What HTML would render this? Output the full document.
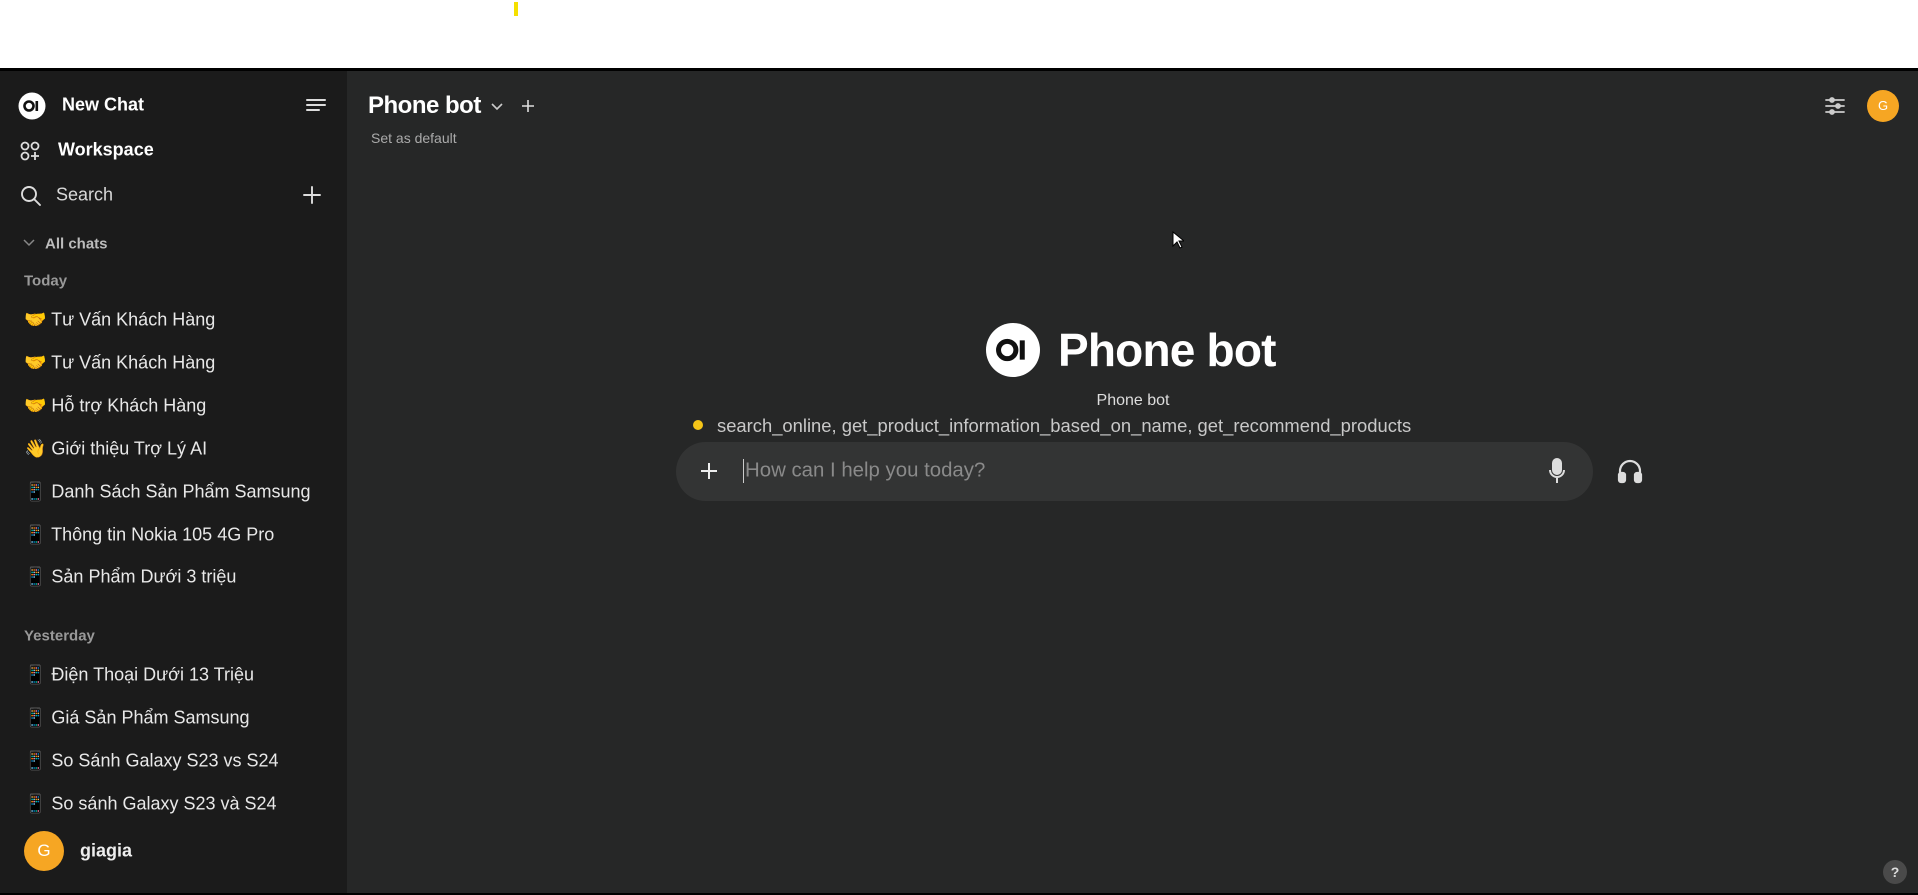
<!DOCTYPE html>
<html><head><meta charset="utf-8"><style>
*{margin:0;padding:0;box-sizing:border-box}
body{width:1918px;height:895px;background:#fff;font-family:"Liberation Sans","Noto Sans CJK SC",sans-serif;position:relative;overflow:hidden}
.abs{position:absolute}
#top{left:0;top:0;width:1918px;height:68px;background:#fff}
#bar{left:0;top:68px;width:1918px;height:3px;background:#000}
#side{left:0;top:71px;width:347px;height:822px;background:#1b1b1b}
#main{left:347px;top:71px;width:1571px;height:822px;background:#262727}
#bot{left:0;top:893px;width:1918px;height:2px;background:#000}
.t{position:absolute;color:#ececec;white-space:nowrap;transform:translateY(-50%)}
.it{font-size:18px;left:24px;color:#e8e8e8}
</style></head><body>
<div class="abs" id="top"></div><div class="abs" style="left:514px;top:2px;width:4px;height:14px;background:#f5e000"></div>
<div class="abs" id="bar"></div>
<div class="abs" id="side"></div>
<div class="abs" id="main"></div>
<div class="abs" id="bot"></div>

<svg class="abs" style="left:18px;top:92px" width="28" height="28" viewBox="0 0 28 28"><circle cx="14" cy="14" r="13.5" fill="#fff"/><circle cx="11" cy="14" r="4.5" fill="none" stroke="#111" stroke-width="2.6"/><rect x="17.5" y="9" width="2.6" height="10" fill="#111"/></svg>
<div class="t" style="left:62px;top:105px;font-size:18px;font-weight:bold;color:#fff">New Chat</div>
<svg class="abs" style="left:305px;top:97px" width="22" height="16" viewBox="0 0 22 16" stroke="#ddd" stroke-width="2" stroke-linecap="round"><path d="M2 3h18M2 8h18M2 13h12"/></svg>
<svg class="abs" style="left:19px;top:140px" width="22" height="22" viewBox="0 0 22 22" fill="none" stroke="#ddd" stroke-width="1.8"><circle cx="6" cy="6" r="3.5"/><circle cx="16" cy="6" r="3.5"/><circle cx="6" cy="16" r="3.5"/><path d="M16 12v8M12 16h8"/></svg>
<div class="t" style="left:58px;top:150px;font-size:18px;font-weight:bold;color:#fff">Workspace</div>
<svg class="abs" style="left:20px;top:185px" width="22" height="22" viewBox="0 0 22 22" fill="none" stroke="#ddd" stroke-width="1.9"><circle cx="9" cy="9" r="7"/><path d="M14 14l6 6" stroke-linecap="round"/></svg>
<div class="t" style="left:56px;top:195px;font-size:18px;color:#d8d8d8">Search</div>
<svg class="abs" style="left:302px;top:185px" width="20" height="20" viewBox="0 0 20 20" stroke="#ddd" stroke-width="1.9" stroke-linecap="round"><path d="M10 2v16M2 10h16"/></svg>
<svg class="abs" style="left:23px;top:238px" width="12" height="10" viewBox="0 0 12 10" fill="none" stroke="#888" stroke-width="1.5"><path d="M1 2l5 5 5-5"/></svg>
<div class="t" style="left:45px;top:244px;font-size:15px;font-weight:bold;color:#bbb">All chats</div>
<div class="t" style="left:24px;top:281px;font-size:15px;font-weight:bold;color:#999">Today</div>
<div class="t it" style="top:320px">🤝 Tư Vấn Khách Hàng</div>
<div class="t it" style="top:363px">🤝 Tư Vấn Khách Hàng</div>
<div class="t it" style="top:406px">🤝 Hỗ trợ Khách Hàng</div>
<div class="t it" style="top:449px">👋 Giới thiệu Trợ Lý AI</div>
<div class="t it" style="top:492px;width:291px;overflow:hidden">📱 Danh Sách Sản Phẩm Samsung</div>
<div class="t it" style="top:535px">📱 Thông tin Nokia 105 4G Pro</div>
<div class="t it" style="top:577px">📱 Sản Phẩm Dưới 3 triệu</div>
<div class="t" style="left:24px;top:636px;font-size:15px;font-weight:bold;color:#999">Yesterday</div>
<div class="t it" style="top:675px">📱 Điện Thoại Dưới 13 Triệu</div>
<div class="t it" style="top:718px">📱 Giá Sản Phẩm Samsung</div>
<div class="t it" style="top:761px">📱 So Sánh Galaxy S23 vs S24</div>
<div class="t it" style="top:804px">📱 So sánh Galaxy S23 và S24</div>
<div class="abs" style="left:24px;top:831px;width:40px;height:40px;border-radius:50%;background:#f6a623;color:#fff;font-size:17px;text-align:center;line-height:40px">G</div>
<div class="t" style="left:80px;top:851px;font-size:18px;font-weight:bold;color:#eee">giagia</div>

<div class="t" style="left:368px;top:106px;font-size:24px;font-weight:bold;color:#fff;letter-spacing:-0.5px">Phone bot</div>
<svg class="abs" style="left:491px;top:102px" width="12" height="9" viewBox="0 0 12 9" fill="none" stroke="#ccc" stroke-width="1.6"><path d="M1 2l5 5 5-5"/></svg>
<svg class="abs" style="left:521px;top:99px" width="14" height="14" viewBox="0 0 14 14" stroke="#ddd" stroke-width="1.6"><path d="M7 1v12M1 7h12"/></svg>
<div class="t" style="left:371px;top:138px;font-size:14px;color:#aaa">Set as default</div>
<svg class="abs" style="left:1824px;top:96px" width="22" height="20" viewBox="0 0 22 20" stroke="#ccc" stroke-width="1.8" stroke-linecap="round"><path d="M2 4h18M2 10h18M2 16h18"/><circle cx="8" cy="4" r="2" fill="#ccc"/><circle cx="14" cy="10" r="2" fill="#ccc"/><circle cx="8" cy="16" r="2" fill="#ccc"/></svg>
<div class="abs" style="left:1867px;top:90px;width:32px;height:32px;border-radius:50%;background:#f6a623;color:#fff;font-size:13px;text-align:center;line-height:32px">G</div>

<svg class="abs" style="left:986px;top:323px" width="54" height="54" viewBox="0 0 28 28"><circle cx="14" cy="14" r="14" fill="#fff"/><circle cx="11" cy="14" r="4.5" fill="none" stroke="#111" stroke-width="2.6"/><rect x="17.5" y="9" width="2.6" height="10" fill="#111"/></svg>
<div class="t" style="left:1058px;top:350px;font-size:46px;font-weight:bold;color:#fff;letter-spacing:-0.8px">Phone bot</div>
<div class="t" style="left:1133px;top:401px;font-size:16px;color:#ddd;transform:translate(-50%,-50%)">Phone bot</div>
<div class="abs" style="left:693px;top:420px;width:10px;height:10px;border-radius:50%;background:#f5c518"></div>
<div class="t" style="left:717px;top:426px;font-size:18.4px;color:#c8c8c8">search_online, get_product_information_based_on_name, get_recommend_products</div>
<div class="abs" style="left:676px;top:442px;width:917px;height:59px;border-radius:30px;background:#333434"></div>
<svg class="abs" style="left:700px;top:462px" width="18" height="18" viewBox="0 0 18 18" stroke="#eee" stroke-width="2"><path d="M9 1v16M1 9h16"/></svg>
<div class="abs" style="left:743px;top:459px;width:1px;height:24px;background:#ccc"></div>
<div class="t" style="left:745px;top:471px;font-size:20.4px;color:#8a8a8a">How can I help you today?</div>
<svg class="abs" style="left:1548px;top:458px" width="18" height="26" viewBox="0 0 18 26" fill="none" stroke="#ddd" stroke-width="2"><rect x="5" y="1" width="8" height="15" rx="4" fill="#ddd"/><path d="M2 12a7 7 0 0 0 14 0M9 19v6"/></svg>
<svg class="abs" style="left:1617px;top:458px" width="26" height="26" viewBox="0 0 26 26" fill="none" stroke="#ddd" stroke-width="2.2"><path d="M3 18v-5a10 10 0 0 1 20 0v5"/><rect x="2" y="15" width="6" height="9" rx="2" fill="#ddd"/><rect x="18" y="15" width="6" height="9" rx="2" fill="#ddd"/></svg>
<div class="abs" style="left:1883px;top:860px;width:24px;height:24px;border-radius:50%;background:#4a4a4a;color:#ddd;font-size:14px;font-weight:bold;text-align:center;line-height:24px">?</div>
<svg class="abs" style="left:1172px;top:231px" width="12" height="18" viewBox="0 0 12 18"><path d="M1 1v14l4-4 3 6 2-1-3-6h5z" fill="#fff" stroke="#000" stroke-width="1"/></svg>
</body></html>
